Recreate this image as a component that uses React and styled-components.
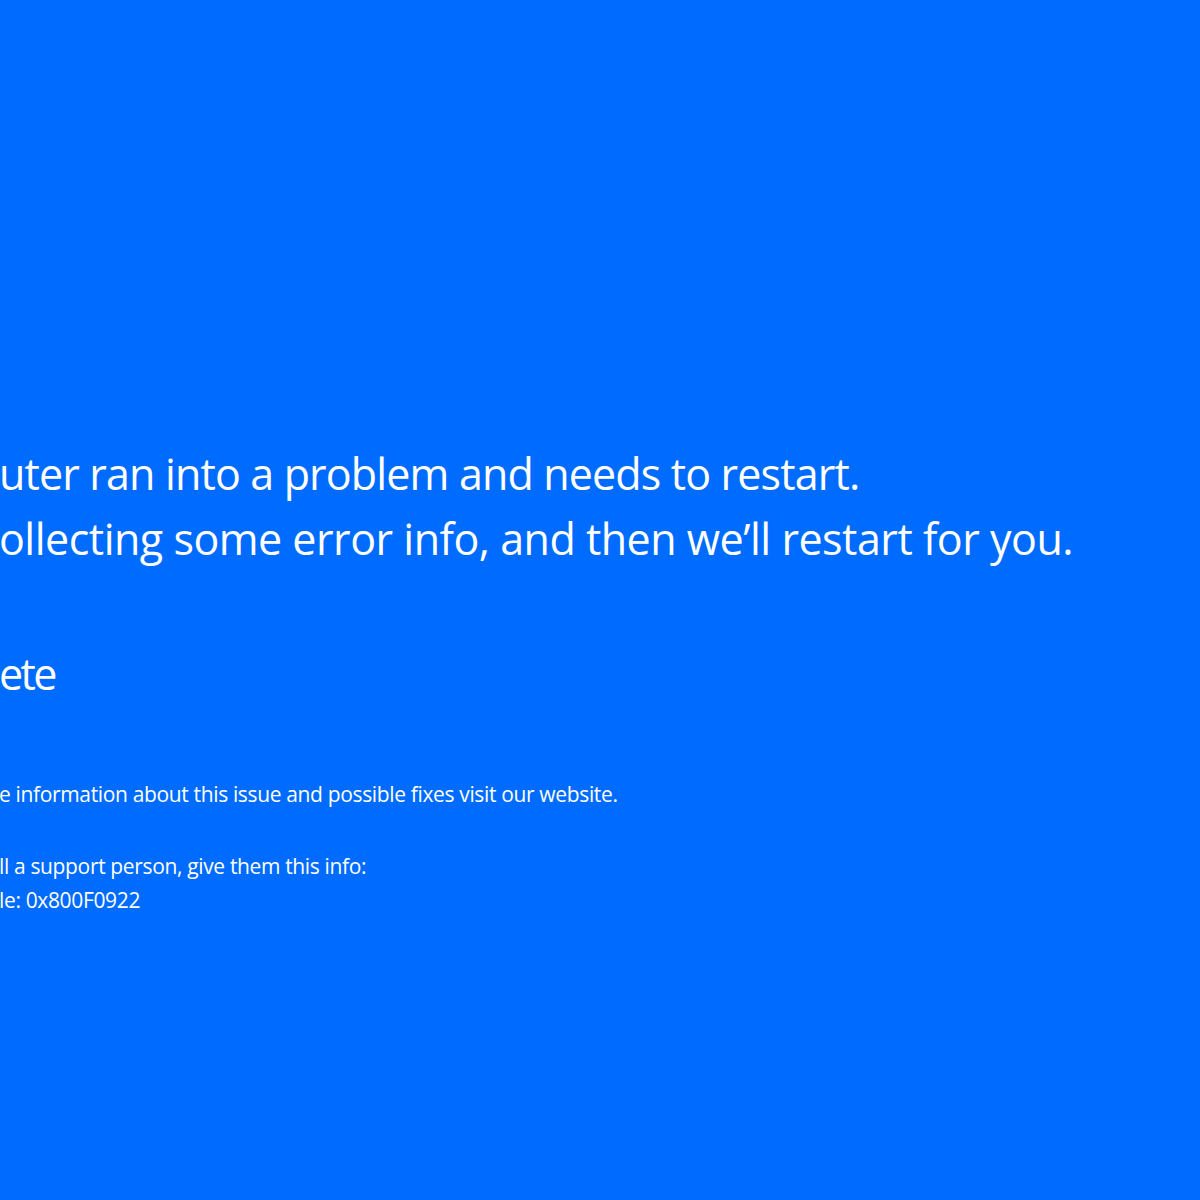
import React from "react";
import styled, { createGlobalStyle } from "styled-components";

const Global = createGlobalStyle`
  html, body { margin: 0; padding: 0; background: #006cff; }
  body { font-family: "Open Sans", "Liberation Sans", sans-serif; }
`;

const Screen = styled.div`
  width: 1200px;
  height: 1200px;
  background: #006cff;
  color: #ffffff;
  overflow: hidden;
  display: flex;
  flex-direction: column;
  padding-top: 441px;
  box-sizing: border-box;
`;

const Headline = styled.p`
  margin: 0 0 0 -1px;
  font-size: 43px;
  line-height: 65px;
  white-space: nowrap;
  letter-spacing: ${(p) => p.$ls}px;
`;

const Progress = styled.p`
  margin: 70px 0 0 -1px;
  font-size: 43px;
  line-height: 65px;
  white-space: nowrap;
  letter-spacing: -2.6px;
`;

const Info = styled.p`
  margin: ${(p) => p.$top}px 0 0 -1px;
  font-size: 21px;
  line-height: 34px;
  white-space: nowrap;
  letter-spacing: -0.35px;
`;

export default function App() {
  return (
    <>
      <Global />
      <Screen>
        <Headline $ls={-0.85}>uter ran into a problem and needs to restart.</Headline>
        <Headline $ls={-0.5}>ollecting some error info, and then we’ll restart for you.</Headline>
        <Progress>ete</Progress>
        <Info $top={71}>e information about this issue and possible fixes visit our website.</Info>
        <Info $top={38}>ll a support person, give them this info:</Info>
        <Info $top={0}>le: 0x800F0922</Info>
      </Screen>
    </>
  );
}
